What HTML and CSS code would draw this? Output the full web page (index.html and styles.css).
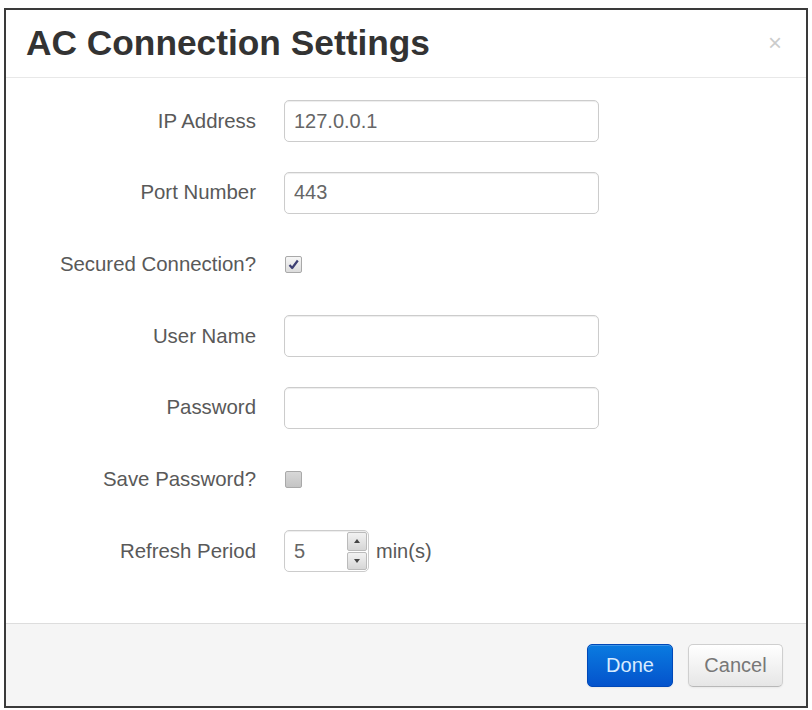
FILE: index.html
```html
<!DOCTYPE html>
<html lang="en">
<head>
  <meta charset="UTF-8" />
  <meta name="viewport" content="width=device-width, initial-scale=1.0" />
  <title>AC Connection Settings</title>
  <link rel="stylesheet" href="styles.css">
</head>
<body>
  <!-- Settings dialog -->
  <div class="modal">
    <div class="modal-header">
      <h3>AC Connection Settings</h3>
      <button class="close" type="button">&times;</button>
    </div>

    <form class="modal-body">
      <div class="form-row">
        <label for="ip">IP Address</label>
        <input id="ip" type="text" value="127.0.0.1" />
      </div>
      <div class="form-row">
        <label for="port">Port Number</label>
        <input id="port" type="text" value="443" />
      </div>
      <div class="form-row">
        <label>Secured Connection?</label>
        <span class="check checked">
          <svg width="11" height="11" viewBox="0 0 11 11"><path d="M1.5 6 L4.2 9 L9.8 1.5" fill="none" stroke="#3d3f73" stroke-width="2.2" stroke-linejoin="round" /></svg>
        </span>
      </div>
      <div class="form-row">
        <label for="user">User Name</label>
        <input id="user" type="text" />
      </div>
      <div class="form-row">
        <label for="pass">Password</label>
        <input id="pass" type="password" />
      </div>
      <div class="form-row">
        <label>Save Password?</label>
        <span class="check"></span>
      </div>
      <div class="form-row">
        <label for="refresh">Refresh Period</label>
        <div class="spin-field">
          <input id="refresh" type="text" value="5" />
          <div class="spin">
            <span class="spin-btn"><i class="arrow up"></i></span>
            <span class="spin-btn"><i class="arrow down"></i></span>
          </div>
        </div>
        <span class="unit">min(s)</span>
      </div>
    </form>

    <div class="modal-footer">
      <button class="btn btn-primary" type="button">Done</button>
      <button class="btn" type="button">Cancel</button>
    </div>
  </div>
</body>
</html>
```

FILE: styles.css
```css
* {
  box-sizing: border-box;
}

body {
  margin: 0;
  background: #fff;
  font-family: "Liberation Sans", Arial, sans-serif;
}

.modal {
  width: 804px;
  height: 700px;
  margin: 8px 0 0 4px;
  border: 2px solid #3a3a3a;
  background: #fff;
  display: flex;
  flex-direction: column;
}

.modal-header {
  height: 68px;
  padding: 12px 24px 0 20px;
  border-bottom: 1px solid #e8e8e8;
  display: flex;
  justify-content: space-between;
  align-items: flex-start;
}

.modal-header h3 {
  margin: 0;
  font-size: 35.3px;
  line-height: 42px;
  font-weight: bold;
  color: #333;
}

.close {
  margin-top: 9px;
  padding: 0;
  border: none;
  background: none;
  font-family: inherit;
  font-size: 24px;
  line-height: 24px;
  color: #000;
  opacity: 0.2;
  cursor: pointer;
}

.modal-body {
  flex: 1;
  margin: 0;
  padding-top: 22px;
  display: flex;
  flex-direction: column;
  gap: 29.7px;
}

.form-row {
  height: 42px;
  display: flex;
  align-items: center;
}

.form-row label {
  width: 250px;
  margin-right: 28px;
  text-align: right;
  font-size: 20.4px;
  color: #595959;
}

.form-row input {
  width: 315px;
  height: 42px;
  padding: 0 9px;
  border: 1px solid #ccc;
  border-radius: 5px;
  box-shadow: inset 0 1px 1px rgba(0, 0, 0, 0.075);
  font-family: inherit;
  font-size: 20px;
  color: #666;
  outline: none;
}

.check {
  width: 17px;
  height: 17px;
  margin-left: 1px;
  border: 1px solid #a9a9a9;
  border-radius: 2px;
  background: linear-gradient(#d8d8d8, #c4c4c4);
  display: flex;
  align-items: center;
  justify-content: center;
}

.check.checked {
  background: linear-gradient(#f6f6f6, #dcdcdc);
}

.spin-field {
  width: 85px;
  height: 42px;
  display: flex;
  border: 1px solid #ccc;
  border-radius: 5px;
  overflow: hidden;
  box-shadow: inset 0 1px 1px rgba(0, 0, 0, 0.075);
}

.spin-field input {
  width: 62px;
  height: 40px;
  border: none;
  border-radius: 0;
  box-shadow: none;
  background: transparent;
}

.spin {
  width: 22px;
  display: flex;
  flex-direction: column;
  gap: 1px;
  padding: 1px 1px 1px 0;
}

.spin-btn {
  flex: 1;
  border: 1px solid #bbb;
  border-radius: 2px;
  background: linear-gradient(#f2f2f2, #d6d6d6);
  display: flex;
  align-items: center;
  justify-content: center;
}

.arrow {
  width: 0;
  height: 0;
  border-left: 3px solid transparent;
  border-right: 3px solid transparent;
}

.arrow.up {
  border-bottom: 4px solid #444;
}

.arrow.down {
  border-top: 4px solid #444;
}

.unit {
  margin-left: 7px;
  font-size: 20px;
  color: #595959;
}

.modal-footer {
  height: 83px;
  padding: 0 23px;
  border-top: 1px solid #ddd;
  background: #f5f5f5;
  display: flex;
  justify-content: flex-end;
  align-items: center;
  gap: 15px;
}

.btn {
  width: 95px;
  height: 43px;
  padding: 0;
  border: 1px solid #cfcfcf;
  border-bottom-color: #b8b8b8;
  border-radius: 5px;
  background: linear-gradient(#ffffff, #e6e6e6);
  box-shadow: inset 0 1px 0 rgba(255, 255, 255, 0.2), 0 1px 2px rgba(0, 0, 0, 0.05);
  font-family: inherit;
  font-size: 20px;
  color: #777;
  cursor: pointer;
}

.btn-primary {
  width: 86px;
  border-color: #0048b8;
  background: linear-gradient(#0a7be0, #0453cc);
  color: #d8ebff;
}
```
